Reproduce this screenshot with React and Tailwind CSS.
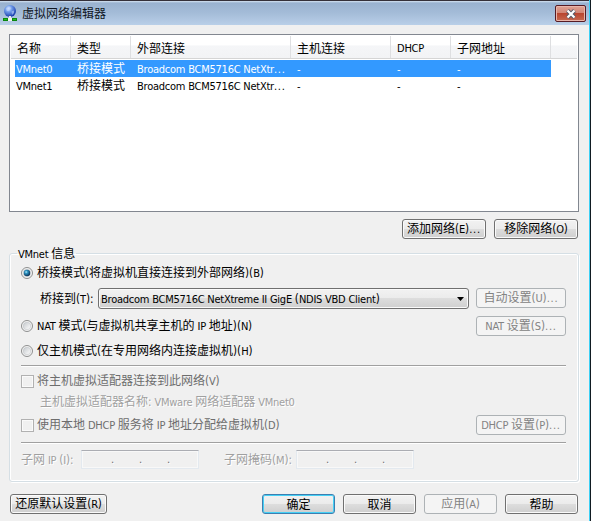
import clsx from "clsx";

const columns = [
    { key: "name", label: "名称", width: "w-[60px]" },
    { key: "type", label: "类型", width: "w-[60px]" },
    { key: "external", label: "外部连接", width: "w-[160px]" },
    { key: "host", label: "主机连接", width: "w-[100px]" },
    { key: "dhcp", label: "DHCP", width: "w-[60px]" },
    { key: "subnet", label: "子网地址", width: "w-[100px]" },
];

const networks = [
    { name: "VMnet0", type: "桥接模式", external: "Broadcom BCM5716C NetXtr...", host: "-", dhcp: "-", subnet: "-" },
    { name: "VMnet1", type: "桥接模式", external: "Broadcom BCM5716C NetXtr...", host: "-", dhcp: "-", subnet: "-" },
];

const runClass = (run) => {
    if (/[\u4e00-\u9fff]/.test(run)) return "text-[12px]";
    if (run[0] === ".") return "text-[11px] tracking-[0.8px]";
    if (/[():]/.test(run)) return "text-[11.5px]";
    return "text-[11px] tracking-[-0.24px]";
}

// Chinese runs are set at 12px, latin at 11px, dots and brackets a little wider
function Text({ children, className }) {
    const runs = children.match(/[\u4e00-\u9fff]+|\.+|[():]+|[^\u4e00-\u9fff.():]+/g);

    return (
        <span className={clsx("whitespace-pre leading-[16px]", className)}>
            {runs.map((run, i) => (
                <span key={i} className={runClass(run)}>{run}</span>
            ))}
        </span>
    );
}

function Button({ children, className, disabled, primary }) {
    return (
        <button
            disabled={disabled}
            className={clsx(
                "flex h-5 shrink-0 items-center justify-center rounded-[3px] border",
                disabled && "border-[#adb2b5] bg-[#f4f4f4] text-[#838383]",
                !disabled && "bg-[linear-gradient(#f2f2f2_0%,#ebebeb_49%,#dddddd_50%,#cfcfcf_100%)]",
                !disabled && !primary && "border-[#707070] shadow-[inset_0_0_0_1px_#fafafa]",
                primary && "border-[#3c7fb1] shadow-[inset_0_0_0_1px_#46d0f5]",
                className
            )}
        >
            <Text>{children}</Text>
        </button>
    );
}

function Radio({ children, checked, className }) {
    return (
        <label className={clsx("flex h-4 items-center gap-[4px]", className)}>
            <svg width="12" height="12" viewBox="0 0 12 12">
                <defs>
                    <linearGradient id="well" x1="0" y1="0" x2="1" y2="1">
                        <stop offset="0" stopColor="#c4c8cc" />
                        <stop offset="1" stopColor="#ffffff" />
                    </linearGradient>
                    <radialGradient id="dot" cx="0.38" cy="0.35" r="0.65">
                        <stop offset="0" stopColor="#b5eafa" />
                        <stop offset="0.35" stopColor="#2d93c1" />
                        <stop offset="1" stopColor="#0b3257" />
                    </radialGradient>
                </defs>
                <circle cx="6" cy="6" r="5.5" fill="#f6f6f6" stroke="#8e8f8f" />
                <circle cx="6" cy="6" r="3.8" fill="url(#well)" stroke="#b9bdc0" strokeWidth="0.5" />
                {checked && <circle cx="6" cy="6" r="3.2" fill="url(#dot)" />}
            </svg>
            <Text>{children}</Text>
        </label>
    );
}

function Checkbox({ children }) {
    return (
        <label className="flex h-4 items-center gap-[3px] text-[#6d6d6d]">
            <span className="size-[13px] border border-[#b1b1b1] bg-[#f0f0f0] shadow-[inset_0_0_0_1px_#fafafa]" />
            <Text>{children}</Text>
        </label>
    );
}

function AddressField({ className }) {
    return (
        <div className={clsx("flex h-[19px] w-[118px] justify-center gap-[25px] border border-[#e3e9ef] border-t-[#abadb3] pl-[1px] text-[11px] leading-[18px] text-[#6d6d6d] shadow-[inset_0_0_0_1px_#f8f8f8]", className)}>
            <span className="w-[3px]">.</span>
            <span className="w-[3px]">.</span>
            <span className="w-[3px]">.</span>
        </div>
    );
}

function Divider({ className }) {
    return <div className={clsx("h-[2px] w-[545px] border-t border-[#a0a0a0] bg-white", className)} />;
}

function NetworkIcon() {
    return (
        <svg width="14" height="17" viewBox="0 0 14 17">
            <defs>
                <radialGradient id="globe" cx="0.38" cy="0.3" r="0.7">
                    <stop offset="0" stopColor="#d8e8ff" />
                    <stop offset="0.4" stopColor="#6f9bea" />
                    <stop offset="1" stopColor="#173bab" />
                </radialGradient>
            </defs>
            <circle cx="7" cy="6" r="6" fill="url(#globe)" />
            <path d="M3 3.5 6 1.5 8 3 6 6 4 6zM8.5 6.5 11 5.5 11 8 9 10z" fill="#bcd2fb" opacity="0.6" />
            <path d="M6 11h2v3h-2z" fill="#e8eee8" />
            <path d="M0 13h5v3H0zM9 13h5v3H9z" fill="#0a870f" />
            <path d="M1 14h3v1H1zM10 14h3v1h-3z" fill="#20c320" />
            <path d="M5 13h4v3H5z" fill="#f2f2f2" />
        </svg>
    );
}

function TitleBar() {
    return (
        <header className="flex h-[25px] border-t border-[#343039] bg-[linear-gradient(#d5e3f2_0px,#99b2d0_2px,#a4bcd8_12px,#b9cfe8_24px)] pl-[3px]">
            <div className="pt-[4px]">
                <NetworkIcon />
            </div>
            <Text className="ml-[5px] mt-[4px] text-[#10161f]">虚拟网络编辑器</Text>
            <button className="ml-auto mr-[3px] mt-[4px] flex h-[17px] w-[31px] items-center justify-center rounded-[2px] border border-[#561b24] bg-[linear-gradient(#dfa294_0%,#d18474_48%,#b94630_50%,#c76a51_100%)] shadow-[inset_0_0_0_1px_#e9b5aa]">
                <svg width="12" height="10" viewBox="0 0 12 10">
                    <path d="M2.5 1.5 9.5 8.5M9.5 1.5 2.5 8.5" stroke="#555a69" strokeWidth="4" />
                    <path d="M2.5 1.5 9.5 8.5M9.5 1.5 2.5 8.5" stroke="#ffffff" strokeWidth="2.2" />
                </svg>
            </button>
        </header>
    );
}

function NetworkList() {
    return (
        <div className="ml-[9px] mt-[9px] h-[178px] w-[570px] border border-[#828790] bg-white px-px pt-px">
            <div className="flex h-[23px] border-b border-[#d5d5d5] bg-[linear-gradient(#ffffff_0%,#ffffff_42%,#f5f6f8_44%,#f2f3f5_100%)]">
                {columns.map((column) => (
                    <div key={column.key} className={clsx("flex items-center border-r border-[#dedfe1] pt-[2px] pl-[6px]", column.width)}>
                        <Text>{column.label}</Text>
                    </div>
                ))}
            </div>
            <div className="pl-[4px] pt-px">
                {networks.map((network, i) => (
                    <div key={network.name} className={clsx("flex h-[17px] w-[536px] items-center", i === 0 && "bg-[#3399ff] text-white")}>
                        {columns.map((column, c) => (
                            <div key={column.key} className={clsx("flex", c === 0 ? "w-[56px] pl-[1px]" : "pl-[6px]", c > 0 && column.width)}>
                                <Text>{network[column.key]}</Text>
                            </div>
                        ))}
                    </div>
                ))}
            </div>
        </div>
    );
}

function NetworkInfo() {
    return (
        <fieldset className="ml-[9px] mt-[6px] h-[237px] w-[570px] rounded-[3px] border border-[#d5dfe5] pl-[11px] shadow-[inset_0_0_0_1px_#ffffff,1px_1px_0_#ffffff]">
            <legend className="-ml-[4px] flex h-4 items-center px-[1px]">
                <Text className="mt-[2px]">VMnet 信息</Text>
            </legend>
            <Radio checked className="mt-[4px]">桥接模式(将虚拟机直接连接到外部网络)(B)</Radio>
            <div className="mt-[7px] flex h-[21px] items-start">
                <Text className="ml-[19px] mt-[2px] w-[58px]">桥接到(T):</Text>
                <div className="flex h-[21px] w-[371px] items-center justify-between rounded-[3px] border border-[#707070] bg-[linear-gradient(#f2f2f2_0%,#ebebeb_49%,#dddddd_50%,#cfcfcf_100%)] pl-[2px] pr-[4px] shadow-[inset_0_0_0_1px_#fafafa]">
                    <Text>Broadcom BCM5716C NetXtreme II GigE (NDIS VBD Client)</Text>
                    <svg width="7" height="4" viewBox="0 0 7 4">
                        <path d="M0 0h7L3.5 4z" fill="#000" />
                    </svg>
                </div>
                <Button disabled className="ml-[7px] w-[90px]">自动设置(U)...</Button>
            </div>
            <div className="mt-[7px] flex h-5 items-center justify-between pr-[12px]">
                <Radio>NAT 模式(与虚拟机共享主机的 IP 地址)(N)</Radio>
                <Button disabled className="w-[90px]">NAT 设置(S)...</Button>
            </div>
            <Radio className="mt-[7px]">仅主机模式(在专用网络内连接虚拟机)(H)</Radio>
            <Divider className="mt-[6px]" />
            <div className="mt-[6px]">
                <Checkbox>将主机虚拟适配器连接到此网络(V)</Checkbox>
            </div>
            <div className="ml-[19px] mt-[5px] flex h-4 items-center text-[#a0a0a0] [text-shadow:1px_1px_0_#fff]">
                <Text>主机虚拟适配器名称: VMware 网络适配器 VMnet0</Text>
            </div>
            <div className="mt-[5px] flex h-5 items-center justify-between pr-[12px]">
                <Checkbox>使用本地 DHCP 服务将 IP 地址分配给虚拟机(D)</Checkbox>
                <Button disabled className="w-[90px]">DHCP 设置(P)...</Button>
            </div>
            <Divider className="mt-[7px]" />
            <div className="mt-[6px] flex h-[19px] items-center text-[#a0a0a0] [text-shadow:1px_1px_0_#fff]">
                <Text className="w-[60px]">子网 IP (I):</Text>
                <AddressField />
                <Text className="ml-[25px] w-[72px]">子网掩码(M):</Text>
                <AddressField />
            </div>
        </fieldset>
    );
}

export default function App() {
    return (
        <div className="flex h-[521px] w-[591px] flex-col overflow-hidden border-r border-[#111b22] bg-[#f0f0f0] font-['DejaVu_Sans_Condensed','Noto_Sans_CJK_SC',sans-serif] text-black">
            <div className="flex-1 border-r border-[#3dd0f5]">
                <TitleBar />
                <NetworkList />
                <div className="ml-[402px] mt-[7px] flex gap-[8px]">
                    <Button className="w-[84px]">添加网络(E)...</Button>
                    <Button className="w-[84px]">移除网络(O)</Button>
                </div>
                <NetworkInfo />
                <footer className="ml-[10px] mt-[12px] flex gap-[8px]">
                    <Button className="mr-auto w-[97px]">还原默认设置(R)</Button>
                    <Button primary className="w-[73px]">确定</Button>
                    <Button className="w-[73px]">取消</Button>
                    <Button disabled className="w-[73px]">应用(A)</Button>
                    <Button className="mr-[11px] w-[73px]">帮助</Button>
                </footer>
            </div>
        </div>
    );
}
